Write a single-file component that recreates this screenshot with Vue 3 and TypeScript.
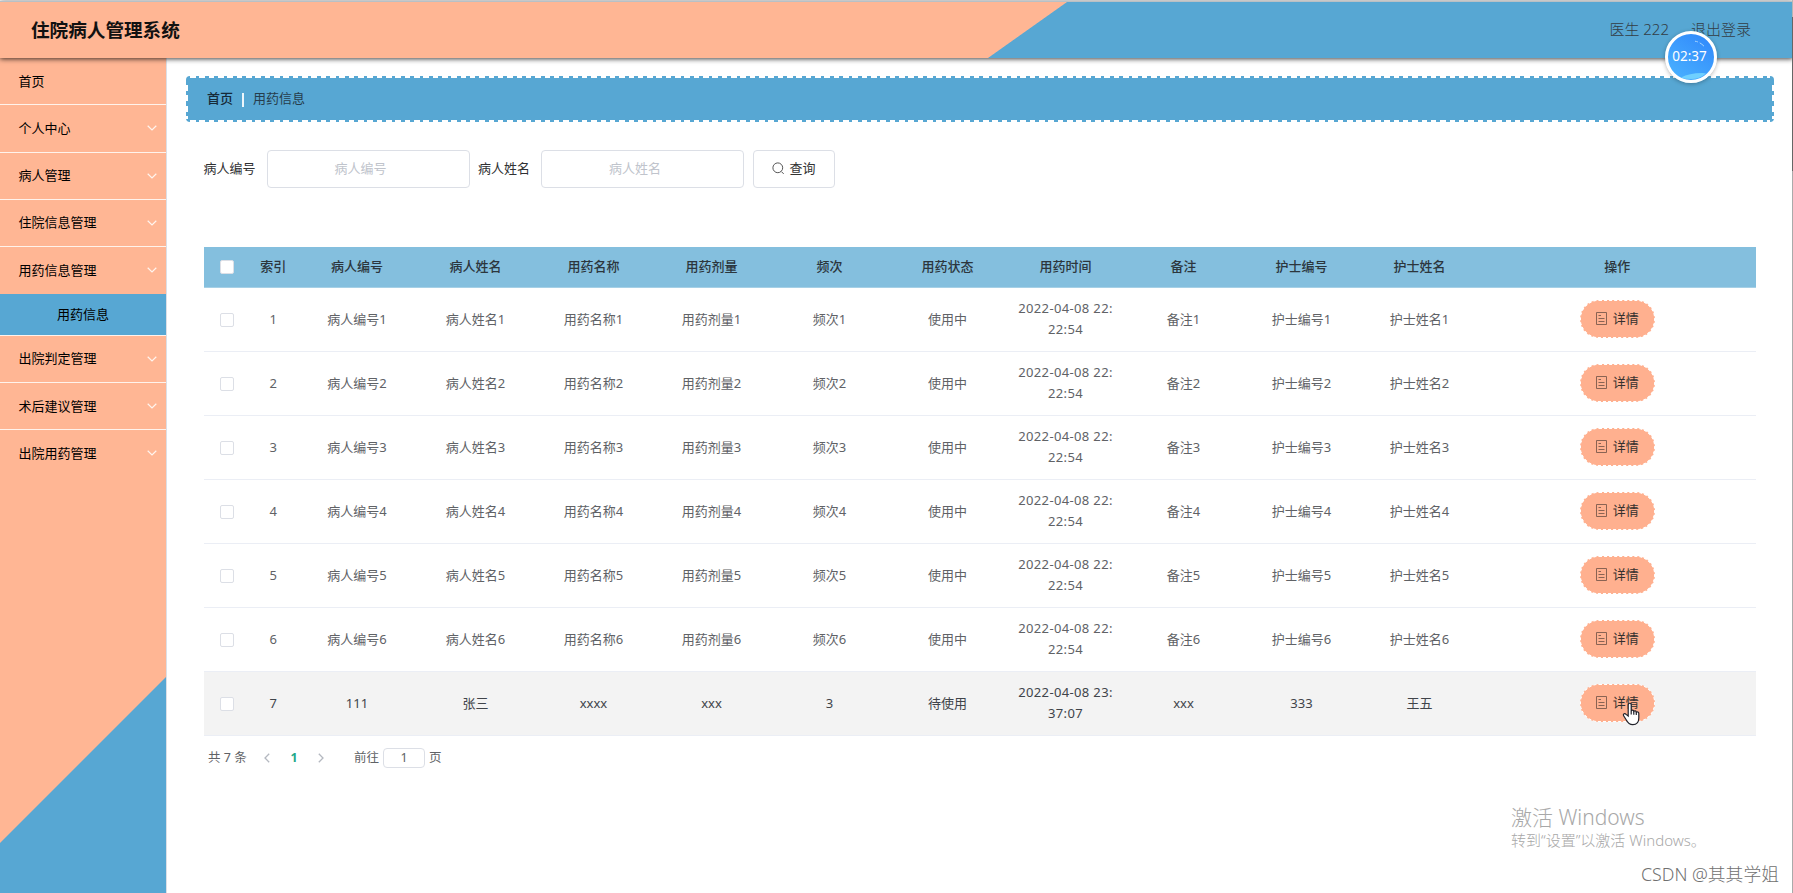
<script setup lang="ts">
interface MenuItem {
  label: string
  expandable: boolean
  child?: string
}

interface Row {
  cells: string[][]
  hovered: boolean
}

const menu: MenuItem[] = [
  { label: '首页', expandable: false },
  { label: '个人中心', expandable: true },
  { label: '病人管理', expandable: true },
  { label: '住院信息管理', expandable: true },
  { label: '用药信息管理', expandable: true, child: '用药信息' },
  { label: '出院判定管理', expandable: true },
  { label: '术后建议管理', expandable: true },
  { label: '出院用药管理', expandable: true },
]

const filters = ['病人编号', '病人姓名']

const columns = [
  '索引', '病人编号', '病人姓名', '用药名称', '用药剂量', '频次',
  '用药状态', '用药时间', '备注', '护士编号', '护士姓名', '操作',
]

const rows: Row[] = [1, 2, 3, 4, 5, 6].map((n) => ({
  hovered: false,
  cells: [
    [`${n}`], [`病人编号${n}`], [`病人姓名${n}`], [`用药名称${n}`], [`用药剂量${n}`], [`频次${n}`],
    ['使用中'], ['2022-04-08 22:', '22:54'], [`备注${n}`], [`护士编号${n}`], [`护士姓名${n}`],
  ],
}))
rows.push({
  hovered: true,
  cells: [
    ['7'], ['111'], ['张三'], ['xxxx'], ['xxx'], ['3'],
    ['待使用'], ['2022-04-08 23:', '37:07'], ['xxx'], ['333'], ['王五'],
  ],
})
</script>

<template>
  <div class="page">
    <header class="topbar">
      <h1>住院病人管理系统</h1>
      <div class="account">
        <span>医生 222</span>
        <span>退出登录</span>
      </div>
    </header>

    <div class="body">
      <aside class="sidebar">
        <template v-for="item in menu" :key="item.label">
          <div class="menu-item">
            <span>{{ item.label }}</span>
            <svg v-if="item.expandable" class="chevron" viewBox="0 0 10 6"><path d="M.7.7 5 4.9 9.3.7" /></svg>
          </div>
          <div v-if="item.child" class="submenu">{{ item.child }}</div>
        </template>
      </aside>

      <main class="content">
        <nav class="crumbs">
          <b>首页</b><i></i><span>用药信息</span>
        </nav>

        <form class="search" @submit.prevent>
          <label v-for="f in filters" :key="f">
            <span>{{ f }}</span>
            <input type="text" :placeholder="f" />
          </label>
          <button type="button" class="query">
            <svg viewBox="0 0 13 13"><circle cx="5.8" cy="5.8" r="4.9" /><path d="m9.4 9.6 2.3 2.3" /></svg>
            <span>查询</span>
          </button>
        </form>

        <section class="table">
          <div class="tr head">
            <div class="td"><span class="check"></span></div>
            <div v-for="c in columns" :key="c" class="td">{{ c }}</div>
          </div>
          <div v-for="(row, i) in rows" :key="i" class="tr" :class="{ hovered: row.hovered }">
            <div class="td"><span class="check"></span></div>
            <div v-for="(cell, j) in row.cells" :key="j" class="td" :class="{ date: cell.length > 1 }">
              <span v-for="line in cell" :key="line">{{ line }}</span>
            </div>
            <div class="td">
              <button type="button" class="detail">
                <svg viewBox="0 0 11 13"><path d="M.5.5h10v12H.5zM2.500 3.500h2.500M2.500 6.500h6M2.500 9.500h6" /></svg>
                <span>详情</span>
                <svg v-if="row.hovered" class="cursor" viewBox="0 0 18 24">
                  <path d="M6.200 14V3.100C6.200.6 9.200.6 9.200 3.100V9c.5-1.300 2.400-1 2.600.5.700-1 2.300-.7 2.500.7 1-.9 2.500-.2 2.500 1.400V16c0 4-2.300 6.600-6 6.600-3.500 0-5-1.600-6.500-4.600L1.500 13.600c-.7-1.800 1.300-2.600 2.600-1.200z" />
                  <path d="M9.200 9v3.500M11.800 9.500v3.200M14.300 10.300v2.600" />
                </svg>
              </button>
            </div>
          </div>
        </section>

        <div class="pager">
          <span class="total">共 7 条</span>
          <svg class="arrow" viewBox="0 0 6 10"><path d="M5.200.8 1 5l4.200 4.200" /></svg>
          <b>1</b>
          <svg class="arrow" viewBox="0 0 6 10"><path d="M.8.8 5 5 .8 9.200" /></svg>
          <span class="goto">前往</span>
          <input type="text" value="1" />
          <span>页</span>
        </div>
      </main>
    </div>

    <div class="timer">
      <svg viewBox="0 0 46 46">
        <path d="M27 7.200q5 .8 9 5" stroke-dasharray="3 2 6 1" />
        <path class="wave" d="M13 43.500q8-4.500 21-4.500 3 0 4 .5-6 5.500-15 5.500-6 0-10-1.500z" />
      </svg>
      <span>02:37</span>
    </div>
    <div class="activate">
      <p>激活 Windows</p>
      <p>转到“设置”以激活 Windows。</p>
    </div>
    <div class="credit">CSDN @其其学姐</div>
    <div class="scroll-edge"></div>
  </div>
</template>

<style>
body {
  margin: 0;
  overflow: hidden;
}
</style>

<style scoped>
.page {
  --blue: #57a7d3;
  --peach: #ffb694;
  position: relative;
  box-sizing: border-box;
  width: 1793px;
  height: 893px;
  padding-top: 1px;
  overflow: hidden;
  background: #fff;
  color: #606266;
  font: 13px/21px "Noto Sans", "Noto Sans CJK SC", sans-serif;
}
.topbar {
  position: relative;
  box-sizing: border-box;
  height: 57px;
  padding: 0 42px 1px 31px;
  display: flex;
  align-items: center;
  justify-content: space-between;
  border-top: 1px solid #b9c0c5;
  background: linear-gradient(to right, transparent 1067px, var(--blue) 1067px),
    linear-gradient(to bottom right, var(--peach) 49.500%, var(--blue) 50.500%) 988px 0 / 79px 100% no-repeat,
    var(--peach);
  box-shadow: 0 1px 5px rgba(0, 0, 0, 0.75);
  z-index: 2;
}
h1 {
  margin: 0;
  color: #111;
  font-size: 18.600px;
  line-height: 28px;
  font-weight: 700;
}
.account {
  display: flex;
  gap: 22px;
  color: #333d45;
  font-size: 15px;
  font-weight: 300;
}
.body {
  display: flex;
  height: 835px;
}
.sidebar {
  box-sizing: border-box;
  width: 167px;
  flex: none;
  border-right: 1px solid #dcdfe6;
  background: linear-gradient(135deg, transparent 49.800%, var(--blue) 50.200%) 0 619px / 166px 166px no-repeat,
    linear-gradient(var(--blue), var(--blue)) 0 785px / 100% 50px no-repeat,
    var(--peach);
  color: #000;
}
.menu-item {
  box-sizing: border-box;
  height: 47.250px;
  padding: 0 9px 0 18.500px;
  display: flex;
  align-items: center;
  justify-content: space-between;
  border-bottom: 1px solid #fff3ec;
}
.menu-item:has(+ .submenu),
.menu-item:last-child {
  border-bottom-color: transparent;
}
.chevron {
  width: 10px;
  height: 6px;
  fill: none;
  stroke: #fff4ee;
  stroke-width: 1.200;
}
.submenu {
  box-sizing: border-box;
  height: 41.500px;
  line-height: 41px;
  text-align: center;
  background: var(--blue);
  border-bottom: 1px solid #fff3ec;
}
.content {
  flex: 1;
  padding: 18px 19px 0;
}
.crumbs {
  --h: repeating-linear-gradient(90deg, #fff 0 5.600px, transparent 5.600px 9.330px);
  --v: repeating-linear-gradient(#fff 0 6px, transparent 6px 10.400px);
  box-sizing: border-box;
  height: 46px;
  width: 1588px;
  padding: 0 0 2px 21px;
  display: flex;
  align-items: center;
  border-radius: 4px;
  background: var(--h) 4px 0 / 1580px 2px no-repeat, var(--h) 4px 100% / 1580px 2px no-repeat,
    var(--v) 0 9px / 2px 34px no-repeat, var(--v) 100% 9px / 2px 34px no-repeat, var(--blue);
  color: #263d4c;
}
.crumbs b {
  font-weight: 500;
  color: #162a38;
}
.crumbs i {
  width: 2px;
  height: 14px;
  margin: 3px 9px 0;
  background: #eef6fb;
}
.search {
  display: flex;
  align-items: center;
  height: 38px;
  margin: 28px 0 0 17.500px;
  gap: 8.500px;
}
.search label {
  display: flex;
  align-items: center;
  gap: 11px;
  color: #303133;
}
.search span {
  position: relative;
  top: -1px;
}
input {
  box-sizing: border-box;
  width: 203px;
  height: 38px;
  padding: 0 29px 2px 14px;
  border: 1px solid #dcdfe6;
  border-radius: 4px;
  background: #fff;
  color: #606266;
  font: inherit;
  text-align: center;
}
.search input::placeholder {
  color: #c0c4cc;
}
.query {
  height: 38px;
  width: 82px;
  padding: 0;
  display: flex;
  align-items: center;
  justify-content: center;
  gap: 5px;
  border: 1px solid #dcdfe6;
  border-radius: 4px;
  background: #fff;
  color: #333;
  font: inherit;
}
.search .query svg {
  width: 13px;
  height: 13px;
  margin-top: -2px;
  fill: none;
  stroke: #555;
}
.table {
  width: 1552px;
  margin: 59px 0 0 18px;
}
.tr {
  display: grid;
  grid-template-columns: 45px 48.500px 119px repeat(9, 118px) 277.500px;
  box-sizing: border-box;
  height: 63.950px;
  border-bottom: 1px solid #ebeef5;
}
.tr.head {
  height: 41px;
  background: #84bfde;
  border-bottom-color: #a6d0e6;
  color: #2c363d;
  font-weight: 500;
}
.head .td {
  padding-bottom: 1px;
}
.tr.hovered {
  background: #f3f3f3;
  color: #40444a;
}
.td {
  display: flex;
  flex-direction: column;
  align-items: center;
  justify-content: center;
}
.date {
  letter-spacing: 0.350px;
}
.check {
  box-sizing: border-box;
  width: 14px;
  height: 14px;
  margin-top: 1px;
  border: 1px solid #dcdfe6;
  border-radius: 2px;
  background: #fff;
}
.detail {
  position: relative;
  width: 75px;
  height: 38px;
  padding: 0;
  display: flex;
  align-items: center;
  justify-content: center;
  gap: 6px;
  border: 1px dashed #fff;
  border-radius: 19px;
  background: #ffb08f;
  color: #35302e;
  font: inherit;
}
.detail svg {
  width: 11px;
  height: 13px;
  margin-top: -2px;
  fill: none;
  stroke: #7d5a4c;
  stroke-width: 0.900;
}
.detail span {
  margin-top: -1px;
}
.detail .cursor {
  position: absolute;
  left: 41px;
  top: 19px;
  width: 18px;
  height: 24px;
  fill: #fff;
  stroke: #20222b;
  stroke-width: 1.200;
}
.pager {
  display: flex;
  align-items: center;
  height: 22px;
  margin: 11px 0 0 22px;
  font-size: 12.500px;
}
.total {
  width: 56px;
}
.arrow {
  width: 6px;
  height: 10px;
  fill: none;
  stroke: #b4b8c0;
  stroke-width: 1.300;
}
.pager b {
  width: 48px;
  text-align: center;
  color: #1fa88a;
}
.goto {
  margin: 0 4px 0 30px;
}
.pager input {
  width: 42px;
  height: 20px;
  padding: 0;
  margin-right: 4px;
}
.timer {
  position: absolute;
  left: 1665px;
  top: 31px;
  z-index: 3;
  box-sizing: border-box;
  width: 52px;
  height: 52px;
  border: 3px solid #fff;
  border-radius: 50%;
  background: linear-gradient(35deg, #4bb4ff, #2f86fb);
  box-shadow: 0 1px 4px rgba(0, 0, 0, 0.3);
  color: #fff;
  font-size: 13.500px;
  line-height: 45px;
  text-align: center;
}
.timer svg {
  position: absolute;
  inset: 0;
  fill: none;
  stroke: #a8d5ff;
}
.timer .wave {
  fill: #6fd0ff;
  stroke: none;
}
.timer span {
  position: relative;
  margin-left: -3px;
}
.activate {
  position: absolute;
  left: 1511px;
  top: 803px;
  color: #a8a8a8;
  white-space: nowrap;
  font-size: 15px;
  font-weight: 300;
}
.activate p {
  margin: 0;
  line-height: 18px;
}
.activate p:first-child {
  font-size: 21px;
  line-height: 28px;
}
.credit {
  position: absolute;
  left: 1641px;
  top: 860px;
  color: #707070;
  font-size: 17.800px;
  font-weight: 300;
  line-height: 28px;
  white-space: nowrap;
}
.scroll-edge {
  position: absolute;
  right: 0;
  top: 0;
  z-index: 3;
  width: 1px;
  height: 893px;
  background: linear-gradient(#b5b5b5 17px, #666 17px 171px, #aaa 171px);
}
</style>
